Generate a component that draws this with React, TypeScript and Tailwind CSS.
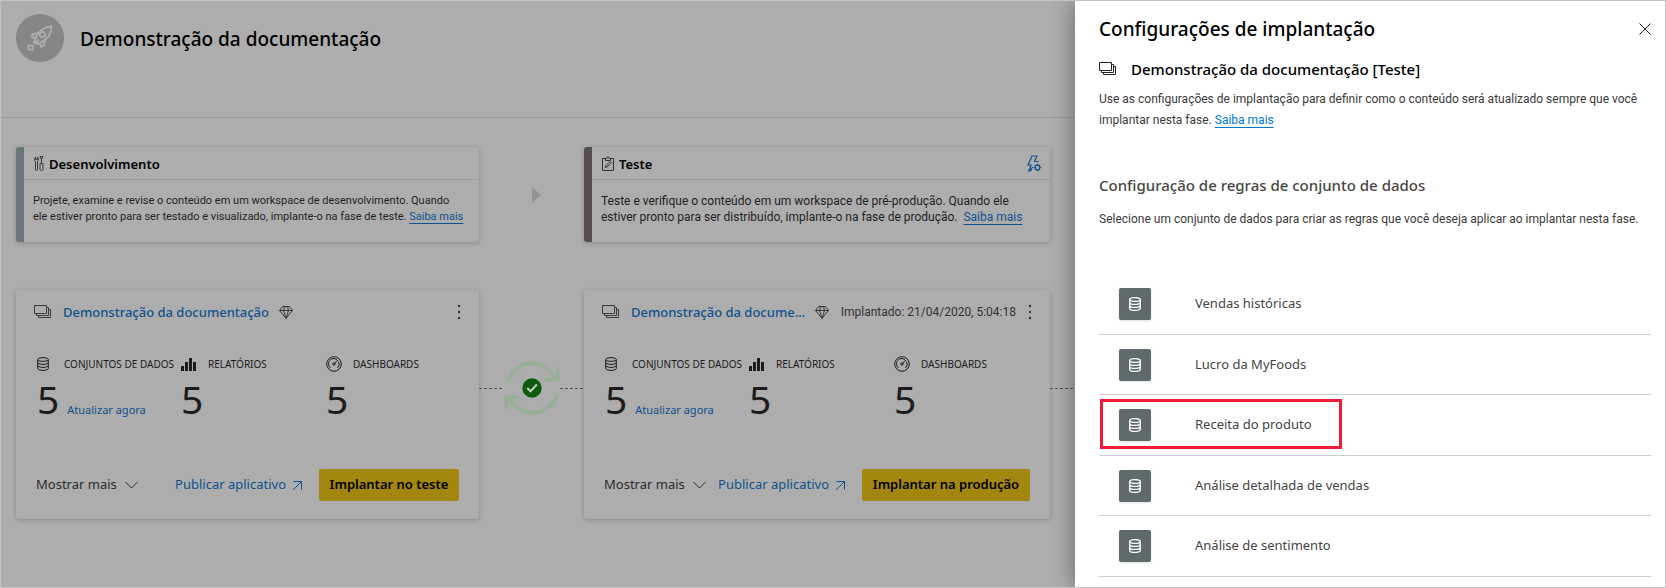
import type { ReactNode } from "react";

type IconProps = { className?: string };

function RocketIcon() {
  return (
    <svg viewBox="0 0 26 26" className="h-[26px] w-[26px] text-[#adadad]" fill="none" stroke="currentColor" strokeWidth="1.9">
      <path d="M24.500 1.500c-5 .2-9 2-12.500 6C10 10 8.300 13 7.500 16l3 3c3-1 6-3 8.500-5C23 10.500 24.500 6.500 24.500 1.500Z" />
      <circle cx="15.500" cy="9.500" r="2.600" />
      <path d="M12 8 5.500 9 4.500 12l4.500 1M18 14.500l-1 6-3 1.300-1-4.300M12 14.500l-4.500 4.500M8 16l-2 2" />
      <path d="M1.500 20.500h3.500l1 1v3H2l-.8-1Z" />
    </svg>
  );
}

function ToolsIcon() {
  return (
    <svg viewBox="0 0 10 15" className="h-[15px] w-[10px] shrink-0 text-[#3a3a3a]" fill="none" stroke="currentColor" strokeWidth="1">
      <path d="M1.500 5.500v8q0 1 1 1t1-1v-8Q4.500 5 4.500 3.500T3.500 1v2.500h-2V1Q.5 2 .5 3.500t1 2Z" />
      <path d="M6 .5h3l-.8 2H6.800ZM7.500 2.500v5M6 7.500h3v6q0 1-1.500 1T6 13.500Z" />
    </svg>
  );
}

function ClipboardIcon() {
  return (
    <svg viewBox="0 0 12 15" className="h-[15px] w-[12px] shrink-0 text-[#2e2e2e]" fill="none" stroke="currentColor" strokeWidth="1">
      <path d="M3.500 2.500h-3v12h11v-12h-3M3.500 4.500v-2h1.300Q5 .6 6 .6t1.200 1.900h1.300v2Z" />
      <path d="m3.500 11.500.6-2 4-4 1.300 1.300-4 4Z" />
    </svg>
  );
}

function BoltGearIcon() {
  return (
    <svg viewBox="0 0 15 17" className="h-[17px] w-[15px]" fill="none" stroke="currentColor" strokeWidth="1.200">
      <path d="M5 15 2 16l2-6H1L5 1h5L7.500 6.500h4" />
      <path d="m2 16 4-4" />
      <circle cx="10.500" cy="12.500" r="2.300" />
      <path d="M10.500 8.800v1.400M10.500 14.800v1.400M6.800 12.500h1.400M12.800 12.500h1.400M8 10l.9.9M12.100 14.100l.9.9M13 10l-.9.9M8.900 14.100 8 15" />
    </svg>
  );
}

function StackIcon({ className = "" }: IconProps) {
  return (
    <svg viewBox="0 0 17 14" className={`h-[14px] w-[17px] shrink-0 ${className}`} fill="none" stroke="currentColor" strokeWidth="1">
      <path d="M.5.5h12v8H.5ZM12.500 2.500h2v8h-12v-2M14.500 4.500h2v8h-12v-2" />
    </svg>
  );
}

function DiamondIcon() {
  return (
    <svg viewBox="0 0 14 13" className="h-[13px] w-[14px] shrink-0 text-[#383838]" fill="none" stroke="currentColor" strokeWidth="1" strokeLinejoin="round">
      <path d="M3.500.5h7l3 4L7 12.400.5 4.500ZM.5 4.500h13M4.500 4.500 7 12.400l2.500-7.900M4.500 4.500 5.500.5M9.500 4.500l-1-4" />
    </svg>
  );
}

function DatabaseIcon({ className = "" }: IconProps) {
  return (
    <svg viewBox="0 0 12 14" className={`h-[14px] w-[12px] ${className}`} fill="none" stroke="currentColor">
      <ellipse cx="6" cy="2.500" rx="5.300" ry="1.900" />
      <path d="M.7 2.500v9c0 1 2.300 1.900 5.300 1.900s5.300-.9 5.300-1.900v-9M.7 5.500c0 1 2.300 1.900 5.300 1.900s5.300-.9 5.300-1.900M.7 8.500c0 1 2.300 1.900 5.300 1.900s5.300-.9 5.300-1.900" />
    </svg>
  );
}

function BarsIcon() {
  return (
    <svg viewBox="0 0 16 14" className="h-[14px] w-[16px]" fill="currentColor">
      <path d="M0 9h3v5H0ZM4 5h3v9H4ZM8 1h3v13H8ZM12 5h3v9h-3Z" />
    </svg>
  );
}

function GaugeIcon() {
  return (
    <svg viewBox="0 0 16 16" className="h-4 w-4" fill="none" stroke="currentColor" strokeWidth="1">
      <circle cx="8" cy="8" r="7.300" />
      <path d="M4.500 12A5.200 5.200 0 1 1 11 3.700M12.500 5.500A5.200 5.200 0 0 1 11.500 12M8.800 7.200 11.800 4" />
      <circle cx="8" cy="8" r="1.200" />
    </svg>
  );
}

function SyncDone() {
  return (
    <svg viewBox="0 0 56 56" className="h-14 w-14 shrink-0" fill="none">
      <g stroke="#97ad95" strokeWidth="4">
        <path d="M4 21C8 10 17 3.500 28 3.500c9.500 0 17 5 22 14M41.500 19.500H53.500V7.500" />
        <path d="M53 35C49 46 39 52.500 28 52.500c-9.500 0-17-4.500-22-13.500M15 37H2.500v12" />
      </g>
      <circle cx="28" cy="28" r="9.700" fill="#0c5b0e" />
      <path d="m23.300 28 3.200 3.300 6.400-6.800" stroke="#c4cfc4" strokeWidth="2" />
    </svg>
  );
}

function Dots() {
  return (
    <svg viewBox="0 0 4 16" className="h-4 w-1" fill="#333">
      <circle cx="2" cy="2" r="1.200" />
      <circle cx="2" cy="8" r="1.200" />
      <circle cx="2" cy="14" r="1.200" />
    </svg>
  );
}

function DottedLine() {
  return <div className="h-px flex-1 bg-[repeating-linear-gradient(90deg,#555_0_3px,transparent_3px_5px)]" />;
}

const link = "text-[#10528f]";
const underlined = "underline decoration-1 underline-offset-3";
const bodyFont = "font-['Roboto','Noto_Sans',sans-serif]";

type PhaseProps = { title: string; icon: ReactNode; bar: string; text: string; action?: ReactNode; children: ReactNode };

function PhaseCard({ title, icon, bar, text, action, children }: PhaseProps) {
  return (
    <section className={`h-[95px] rounded-[3px] border-l-8 shadow-[0_1px_4px_rgba(0,0,0,0.22)] ${bar}`}>
      <header className="flex h-[33px] items-center gap-[5px] border-b border-[#9c9c9c] pr-2 pl-[10px]">
        {icon}
        <h2 className="flex-1 pt-0.5 text-[13px] leading-5 font-semibold text-black">{title}</h2>
        {action}
      </header>
      <p className={`pt-[13px] pl-[9px] leading-4 whitespace-nowrap text-[#1f1f1f] ${bodyFont} ${text}`}>{children}</p>
    </section>
  );
}

function Stat({ icon, label, children }: { icon: ReactNode; label: string; children?: ReactNode }) {
  return (
    <div>
      <div className="flex h-5 items-center">
        <span className="flex w-[27px] shrink-0 items-center">{icon}</span>
        <span className="text-[10px] leading-4 whitespace-nowrap">{label}</span>
      </div>
      <div className="flex items-baseline gap-2">
        <span className="text-[39px] leading-[50px] font-normal">5</span>
        {children}
      </div>
    </div>
  );
}

type WorkspaceProps = { name: string; deployed?: string; action: string; footer: string };

function WorkspaceCard({ name, deployed, action, footer }: WorkspaceProps) {
  return (
    <section className="flex h-[229px] flex-col rounded-[3px] pt-3 pr-5 pb-[18px] pl-[18px] text-[#1c1c1c] shadow-[0_1px_4px_rgba(0,0,0,0.22)]">
      <header className="flex h-5 items-center">
        <StackIcon className="text-[#3c3c3c]" />
        <a href="#workspace" className={`ml-3 text-[13px] leading-6 font-medium whitespace-nowrap ${link}`}>{name}</a>
        <span className="mx-[10px]"><DiamondIcon /></span>
        {deployed && <span className={`ml-auto text-[12px] leading-5 whitespace-nowrap text-[#333] ${bodyFont}`}>{deployed}</span>}
        <button type="button" aria-label="Mais opções" className={`-mr-0.5 pl-3 ${deployed ? "" : "ml-auto"}`}><Dots /></button>
      </header>
      <div className="mt-8 grid grid-cols-[144px_145px_1fr] pl-[3px]">
        <Stat icon={<DatabaseIcon />} label="CONJUNTOS DE DADOS">
          <a href="#atualizar" className={`text-[11px] ${link}`}>Atualizar agora</a>
        </Stat>
        <Stat icon={<BarsIcon />} label="RELATÓRIOS" />
        <Stat icon={<GaugeIcon />} label="DASHBOARDS" />
      </div>
      <footer className="mt-auto flex items-center pl-0.5">
        <button type="button" className="flex items-center gap-2 text-[13px] whitespace-nowrap text-[#2b2b2b]">
          Mostrar mais
          <svg viewBox="0 0 13 8" className="h-2 w-[13px]" fill="none" stroke="currentColor"><path d="m.5 1 6 6 6-6" /></svg>
        </button>
        <a href="#publicar" className={`ml-auto flex items-center gap-1.5 text-[13px] whitespace-nowrap ${link}`}>
          Publicar aplicativo
          <svg viewBox="0 0 11 11" className="h-[11px] w-[11px]" fill="none" stroke="currentColor"><path d="M1.500 1.500h8v8M9.500 1.500 1 10" /></svg>
        </a>
        <button type="button" className={`h-8 rounded-[2px] bg-[#a3860d] text-[13px] font-semibold whitespace-nowrap text-black ${footer}`}>{action}</button>
      </footer>
    </section>
  );
}

const datasets = ["Vendas históricas", "Lucro da MyFoods", "Receita do produto", "Análise detalhada de vendas", "Análise de sentimento"];

function SettingsPanel() {
  return (
    <aside className="relative z-10 w-[590px] shrink-0 bg-white pr-[14px] pl-6 shadow-[0_0_22px_rgba(0,0,0,0.42)]">
      <header className="flex h-[54px] items-center justify-between pt-px">
        <h2 className="text-[19px] leading-7 font-medium text-black">Configurações de implantação</h2>
        <button type="button" aria-label="Fechar" className="text-[#222]">
          <svg viewBox="0 0 12 12" className="h-3 w-3" fill="none" stroke="currentColor"><path d="m.5.5 11 11M11.500.5l-11 11" /></svg>
        </button>
      </header>
      <div className="flex h-7 items-center gap-[15px]">
        <StackIcon className="text-[#222]" />
        <h3 className="text-[15px] leading-6 font-medium text-black">Demonstração da documentação [Teste]</h3>
      </div>
      <p className={`mt-1.5 text-[12px] leading-[21px] text-[#3b3a39] ${bodyFont}`}>
        Use as configurações de implantação para definir como o conteúdo será atualizado sempre que você<br />
        implantar nesta fase.{" "}
        <a href="#saiba" className={`text-[#0078d4] ${underlined}`}>Saiba mais</a>
      </p>
      <h3 className="mt-10 text-[15px] leading-7 font-medium text-[#484644]">Configuração de regras de conjunto de dados</h3>
      <p className={`mt-[10px] text-[12px] leading-5 text-[#3b3a39] ${bodyFont}`}>Selecione um conjunto de dados para criar as regras que você deseja aplicar ao implantar nesta fase.</p>
      <ul className="mt-[45px]">
        {datasets.map((name) => (
          <li key={name} className="relative h-[60px] border-b border-[#cfcfcf] odd:h-[61px]">
            <button type="button" className="flex h-full w-full items-center gap-11 pl-5 text-left text-[13px] text-[#444]">
              <span className="flex h-8 w-8 items-center justify-center rounded-[2px] bg-[#5e6a6b] text-white shadow-sm"><DatabaseIcon className="stroke-[1.3]" /></span>
              {name}
            </button>
            {name === "Receita do produto" && <span className="pointer-events-none absolute top-1 left-px h-[50px] w-[242px] border-3 border-[#ee1c36]" />}
          </li>
        ))}
      </ul>
    </aside>
  );
}

export default function App() {
  return (
    <div className="flex min-h-screen overflow-hidden border border-[#c3c3c3] bg-[#adadad] font-['Noto_Sans',sans-serif]">
      <main className="min-w-0 flex-1">
        <header className="flex h-[117px] items-start gap-4 border-b border-[#9a9a9a] pt-[13px] pl-[15px]">
          <span className="flex h-12 w-12 items-center justify-center rounded-full bg-[#868686]"><RocketIcon /></span>
          <h1 className="pt-[11px] text-[19px] leading-7 font-medium text-black">Demonstração da documentação</h1>
        </header>
        <div className="grid grid-cols-[463px_105px_466px_1fr] pt-[29px] pl-[15px]">
          <PhaseCard title="Desenvolvimento" icon={<ToolsIcon />} bar="border-[#6b7778]" text="text-[11px]">
            Projete, examine e revise o conteúdo em um workspace de desenvolvimento. Quando<br />
            ele estiver pronto para ser testado e visualizado, implante-o na fase de teste.{" "}
            <a href="#dev" className={`${underlined} ${link}`}>Saiba mais</a>
          </PhaseCard>
          <div className="flex items-center justify-center pl-[10px]">
            <svg viewBox="0 0 9 16" className="h-4 w-[9px]" fill="#949392"><path d="m0 0 9 8-9 8Z" /></svg>
          </div>
          <PhaseCard
            title="Teste"
            icon={<ClipboardIcon />}
            bar="border-[#544f4e]"
            text="text-[12px]"
            action={<button type="button" aria-label="Configurações de implantação" className={link}><BoltGearIcon /></button>}
          >
            Teste e verifique o conteúdo em um workspace de pré-produção. Quando ele<br />
            estiver pronto para ser distribuído, implante-o na fase de produção.&nbsp;{" "}
            <a href="#teste" className={`${underlined} ${link}`}>Saiba mais</a>
          </PhaseCard>
        </div>
        <div className="grid grid-cols-[463px_105px_466px_1fr] pt-12 pl-[15px]">
          <WorkspaceCard name="Demonstração da documentação" action="Implantar no teste" footer="ml-4 w-[140px]" />
          <div className="flex h-[196px] items-center">
            <DottedLine /><SyncDone /><DottedLine />
          </div>
          <WorkspaceCard name="Demonstração da docume..." deployed="Implantado: 21/04/2020, 5:04:18" action="Implantar na produção" footer="ml-4 w-[168px]" />
          <div className="flex h-[196px] items-center"><DottedLine /></div>
        </div>
      </main>
      <SettingsPanel />
    </div>
  );
}
